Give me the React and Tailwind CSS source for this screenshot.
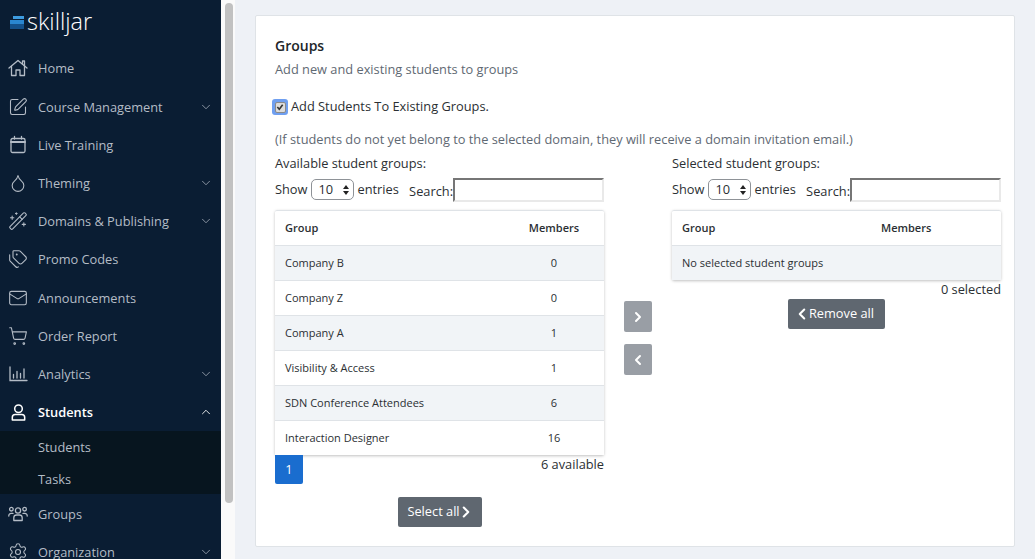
import {
  SquarePen, Droplet, WandSparkles, Tags, Mail, ShoppingCart,
  Settings, ChevronDown, ChevronUp, ChevronLeft, ChevronRight,
} from "lucide-react";

const font = { fontFamily: "'Open Sans', sans-serif" };

// Sidebar icons the icon package doesn't have in this shape
function HouseIcon({ size, strokeWidth }) {
  return (
    <svg width={size} height={size} viewBox="0 0 20 20" fill="none" stroke="currentColor" strokeWidth={strokeWidth} strokeLinejoin="round" strokeLinecap="round">
      <path d="M1 10 L10 2.5 L19 10" />
      <path d="M14.5 6.2 V3 H16.5 V8" />
      <path d="M3.5 8.5 V17.5 H8 V12 H12 V17.5 H16.5 V8.5" />
    </svg>
  );
}

function CalendarIcon({ size, strokeWidth }) {
  return (
    <svg width={size} height={size} viewBox="0 0 20 20" fill="none" stroke="currentColor" strokeWidth={strokeWidth} strokeLinejoin="round" strokeLinecap="round">
      <rect x="3" y="3.5" width="14" height="14" rx="1.5" />
      <path d="M3 7 H17" strokeWidth="2" />
      <path d="M6.5 1.5 V4 M13.5 1.5 V4" />
    </svg>
  );
}

function BarsIcon({ size, strokeWidth }) {
  return (
    <svg width={size} height={size} viewBox="0 0 20 20" fill="none" stroke="currentColor" strokeWidth={strokeWidth} strokeLinecap="round">
      <path d="M2 3 V16.5 H19" />
      <path d="M5.5 10.5 V14 M9 7.5 V14 M12.5 9.5 V14 M16 5 V14" />
    </svg>
  );
}

function PersonIcon({ size, strokeWidth }) {
  return (
    <svg width={size} height={size} viewBox="0 0 20 20" fill="none" stroke="currentColor" strokeWidth={strokeWidth}>
      <circle cx="10" cy="6" r="4" />
      <path d="M6.5 12 H13.5 A3 3 0 0 1 16.5 15 V18 H3.5 V15 A3 3 0 0 1 6.5 12 Z" strokeLinejoin="round" />
    </svg>
  );
}

function GroupIcon({ size, strokeWidth }) {
  return (
    <svg width={size} height={size} viewBox="0 0 20 16" fill="none" stroke="currentColor" strokeWidth={strokeWidth} strokeLinecap="round" strokeLinejoin="round">
      <circle cx="10" cy="4.5" r="2.6" />
      <circle cx="3.4" cy="3.2" r="1.8" />
      <circle cx="16.6" cy="3.2" r="1.8" />
      <path d="M5.8 14.5 V11.8 A2.8 2.8 0 0 1 8.6 9 H11.4 A2.8 2.8 0 0 1 14.2 11.8 V14.5 Z" />
      <path d="M0.8 10 A2.4 2.4 0 0 1 3.2 7.4 H5 M19.2 10 A2.4 2.4 0 0 0 16.8 7.4 H15" />
    </svg>
  );
}

const navTop = [
  { label: "Home", icon: HouseIcon, h: "h-[40px]" },
  { label: "Course Management", icon: SquarePen, caret: true, h: "h-[38px]" },
  { label: "Live Training", icon: CalendarIcon, h: "h-[38px]" },
  { label: "Theming", icon: Droplet, caret: true, h: "h-[38px]" },
  { label: "Domains & Publishing", icon: WandSparkles, caret: true, h: "h-[38px]" },
  { label: "Promo Codes", icon: Tags, h: "h-[39px] pb-[1px]" },
  { label: "Announcements", icon: Mail, h: "h-[38px]" },
  { label: "Order Report", icon: ShoppingCart, h: "h-[38px]" },
  { label: "Analytics", icon: BarsIcon, caret: true, h: "h-[38px]" },
];

const available = [
  ["Company B", 0],
  ["Company Z", 0],
  ["Company A", 1],
  ["Visibility & Access", 1],
  ["SDN Conference Attendees", 6],
  ["Interaction Designer", 16],
];

function NavItem({ item }) {
  const Icon = item.icon;
  return (
    <div className={`flex shrink-0 items-center pl-[8px] pr-[8px] text-[12.8px] text-[#b4bcc6] ${item.h}`}>
      <span className="flex w-[20px] justify-center">
        <Icon size={20} strokeWidth={1.3} />
      </span>
      <span className="ml-[10px] mt-[2px] flex-1">{item.label}</span>
      {item.caret && <ChevronDown size={14} strokeWidth={1.25} />}
    </div>
  );
}

function Sidebar() {
  return (
    <aside className="flex w-[221px] shrink-0 flex-col overflow-hidden bg-[#0a1d33]">
      {/* Logo */}
      <div className="flex h-[48px] shrink-0 items-start pl-[10px] pt-[5px]">
        <svg width="14" height="14" viewBox="0 0 14 14" className="mt-[11px]">
          <rect x="3" y="0" width="11" height="3" fill="#3d9be0" />
          <rect x="0" y="4" width="14" height="4" fill="#2a86d0" />
          <rect x="0" y="8" width="14" height="5" fill="#14508a" />
        </svg>
        <span className="ml-[3px] text-[23.5px] leading-[32px] font-light text-white">skilljar</span>
      </div>

      {navTop.map((item) => (
        <NavItem key={item.label} item={item} />
      ))}

      {/* Expanded section */}
      <div className="flex h-[38px] shrink-0 items-center pl-[8px] pr-[8px] text-[12.8px] font-semibold text-white">
        <span className="flex w-[20px] justify-center">
          <PersonIcon size={19} strokeWidth={1.6} />
        </span>
        <span className="ml-[10px] mt-[2px] flex-1">Students</span>
        <ChevronUp size={14} strokeWidth={1.5} />
      </div>
      <div className="flex h-[63px] shrink-0 flex-col bg-[#07151f] text-[12.8px] text-[#b4bcc6]">
        <div className="flex h-[31px] items-center pl-[38px] pt-[2px]">Students</div>
        <div className="flex h-[32px] items-center pl-[38px] pt-[3px]">Tasks</div>
      </div>

      <NavItem item={{ label: "Groups", icon: GroupIcon, h: "h-[39px] pt-[1px]" }} />
      <NavItem item={{ label: "Organization", icon: Settings, caret: true, h: "h-[38px]" }} />
    </aside>
  );
}

function Scrollbar() {
  return (
    <div className="w-[14px] shrink-0 bg-[#fafafa] pl-[4px] pt-[3px]">
      <div className="h-[500px] w-[8px] rounded-[4px] bg-[#c1c1c1]" />
    </div>
  );
}

function TableControls() {
  return (
    <div className="flex h-[25px] items-center text-[12.8px] text-[#2b2f33]">
      <span>Show</span>
      <span className="ml-[4px] mr-[3px] flex h-[21px] w-[43px] items-center justify-between rounded-[5px] border border-[#8e9297] bg-white pl-[6px] pr-[3px]">
        10
        <svg width="8" height="12" viewBox="0 0 8 12" fill="#222">
          <path d="M4 1 L7 5 H1 Z" />
          <path d="M4 11 L7 7 H1 Z" />
        </svg>
      </span>
      <span>entries</span>
      <span className="ml-auto mt-[4px]">Search:</span>
      <div className="h-[24px] w-[151px] border-2 border-t-[#767676] border-l-[#767676] border-r-[#e9e9e9] border-b-[#e9e9e9] bg-white" />
    </div>
  );
}

function AvailableTable() {
  return (
    <div className="rounded-[2px] border-t border-[#dfe3e7] shadow-[0_1px_3px_rgba(0,0,0,0.25)]">
      <div className="flex h-[35px] items-center border-b border-[#dfe3e7] text-[11px] font-semibold text-[#2b2f33]">
        <span className="flex-1 pl-[10px]">Group</span>
        <span className="w-[100px] text-center">Members</span>
      </div>
      {available.map(([name, count], i) => (
        <div
          key={name}
          className={`flex h-[35px] items-center border-b border-[#dfe3e7] text-[11px] text-[#2b2f33] last:h-[34px] last:border-b-0 ${i % 2 === 0 ? "bg-[#f1f4f7]" : "bg-white"}`}
        >
          <span className="flex-1 pl-[10px]">{name}</span>
          <span className="w-[100px] text-center">{count}</span>
        </div>
      ))}
    </div>
  );
}

function SelectedTable() {
  return (
    <div className="rounded-[2px] border-t border-[#dfe3e7] shadow-[0_1px_3px_rgba(0,0,0,0.25)]">
      <div className="flex h-[35px] items-center border-b border-[#dfe3e7] text-[11px] font-semibold text-[#2b2f33]">
        <span className="w-[209px] pl-[10px]">Group</span>
        <span>Members</span>
      </div>
      <div className="flex h-[34px] items-center bg-[#f1f4f7] pl-[10px] text-[11px] text-[#2b2f33]">
        No selected student groups
      </div>
    </div>
  );
}

function MoveButton({ icon: Icon }) {
  return (
    <button className="flex h-[31px] w-[28px] items-center justify-center rounded-[2px] bg-[#999ea5] text-white">
      <Icon size={16} strokeWidth={3} />
    </button>
  );
}

export default function App() {
  return (
    <div style={font} className="flex h-[559px] w-[1035px] overflow-hidden bg-[#eef1f6]">
      <Sidebar />
      <Scrollbar />

      <main className="flex-1 pl-[20px] pr-[20px] pt-[15px]">
        <section className="h-[532px] rounded-[2px] border border-[#dfe3e7] bg-white pl-[19px] pt-[20px]">
          <h1 className="text-[14px] leading-[20px] font-semibold text-[#22262a]">Groups</h1>
          <p className="mt-[3px] text-[12.8px] leading-[20px] text-[#5f6973]">
            Add new and existing students to groups
          </p>

          {/* Checkbox */}
          <label className="mt-[18px] flex h-[20px] items-center text-[12.8px] text-[#2b2f33]">
            <span className="-ml-[3px] flex h-[16px] w-[16px] items-center justify-center rounded-[3px] bg-[#6f9ff0]">
              <span className="flex h-[11px] w-[11px] items-center justify-center rounded-[2px] border border-[#8a8a8a] bg-[#dcdcdc]">
                <svg width="8" height="8" viewBox="0 0 9 9" fill="none" stroke="#333" strokeWidth="1.8">
                  <path d="M1.5 4.5 L3.7 7 L7.5 2" />
                </svg>
              </span>
            </span>
            <span className="ml-[3px]">Add Students To Existing Groups.</span>
          </label>

          <p className="mt-[12px] text-[12.8px] leading-[20px] text-[#5f6973]">
            (If students do not yet belong to the selected domain, they will receive a domain invitation email.)
          </p>

          <div className="mt-[4px] grid grid-cols-[329px_68px_329px]">
            {/* Available */}
            <div>
              <div className="h-[20px] text-[12.8px] leading-[20px] text-[#2b2f33]">Available student groups:</div>
              <div className="mt-[4px] mb-[8px]">
                <TableControls />
              </div>
              <AvailableTable />
              <div className="flex items-start justify-between">
                <button className="h-[29px] w-[28px] rounded-b-[2px] bg-[#1a6dcf] text-[12.8px] text-white">1</button>
                <span className="text-[12.8px] leading-[18px] text-[#2b2f33]">6 available</span>
              </div>
              <div className="mt-[13px] flex justify-center">
                <button className="flex h-[30px] w-[84px] items-center justify-center rounded-[2px] bg-[#5f6770] text-[12.8px] text-white">
                  Select all
                  <ChevronRight size={18} strokeWidth={2.75} className="-mx-[3px]" />
                </button>
              </div>
            </div>

            {/* Move buttons */}
            <div className="flex flex-col items-center gap-[12px] pt-[148px]">
              <MoveButton icon={ChevronRight} />
              <MoveButton icon={ChevronLeft} />
            </div>

            {/* Selected */}
            <div>
              <div className="h-[20px] text-[12.8px] leading-[20px] text-[#2b2f33]">Selected student groups:</div>
              <div className="mt-[4px] mb-[8px]">
                <TableControls />
              </div>
              <SelectedTable />
              <div className="text-right text-[12.8px] leading-[18px] text-[#2b2f33]">0 selected</div>
              <div className="mt-[1px] flex justify-center">
                <button className="flex h-[30px] w-[97px] items-center justify-center rounded-[2px] bg-[#5f6770] text-[12.8px] text-white">
                  <ChevronLeft size={18} strokeWidth={2.75} className="-ml-[6px] -mr-[2px]" />
                  Remove all
                </button>
              </div>
            </div>
          </div>
        </section>
      </main>
    </div>
  );
}
